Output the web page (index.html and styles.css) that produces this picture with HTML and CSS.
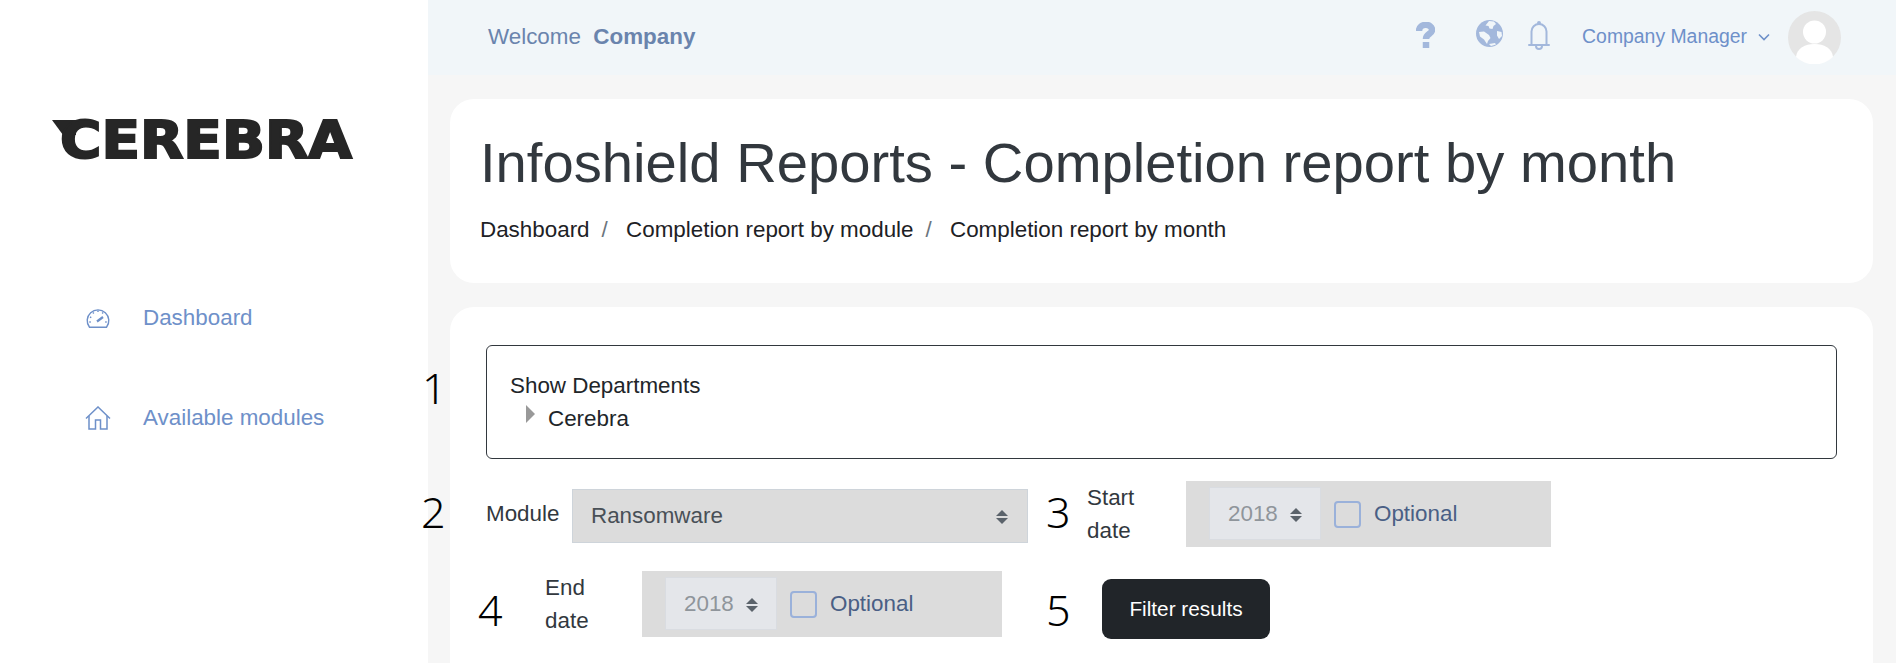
FILE: index.html
```html
<!DOCTYPE html>
<html>
<head>
	<meta charset="utf-8">
	<meta name="viewport" content="width=device-width, initial-scale=1">
	<title>Completion report by month</title>
	<link rel="stylesheet" href="styles.css">
</head>
<body>
	<div class="sidebar">
		<div class="logo">
			<svg width="304" height="70" viewBox="0 0 304 70">
				<polygon points="0,13 24,13 24,28 11,28" fill="#262626"/>
				<text class="logo_text" x="8" y="51" textLength="292" lengthAdjust="spacingAndGlyphs">CEREBRA</text>
			</svg>
		</div>
		<div class="nav">
			<a class="nav_item">
				<svg class="nav_icon" width="24" height="22" viewBox="0 0 24 22" fill="none" stroke="#6e90c9" stroke-width="1.4">
					<path d="M3.500 20.300A10.800 10.800 0 1 1 20.500 20.300Z"/>
					<path d="M11 14.500l6-4.500" stroke-width="2.200"/>
					<path d="M12 3.500v1.500M7 5.500l.8 1M4 10l1.300.6M3.300 15h1.500M20.700 15h-1.500M17 5.500l-.8 1"/>
				</svg>
				Dashboard
			</a>
			<a class="nav_item">
				<svg class="nav_icon" width="26" height="24" viewBox="0 0 26 24" fill="none" stroke="#6e90c9" stroke-width="1.500">
					<path d="M1 12.500L13 1l12 11.500"/>
					<path d="M4 10v13h6.500v-9h5v9H22V10"/>
				</svg>
				Available modules
			</a>
		</div>
	</div>

	<div class="main">
		<div class="header">
			<div class="welcome">Welcome &nbsp;<b>Company</b></div>
			<div class="header_right">
				<svg class="help_icon" width="19" height="26" viewBox="0 0 19 26" fill="none" stroke="#a3b8dc" stroke-width="6.500">
					<path d="M3 9C3 1 16 1 16 8C16 12 10 12 10 17"/>
					<path d="M10 20v6"/>
				</svg>
				<svg class="globe_icon" width="27" height="27" viewBox="0 0 27 27">
					<circle cx="13.500" cy="13.500" r="13.500" fill="#a3b8dc"/>
					<path d="M13 1l5 .5 2 2.500-2.500 2-1 3-3-.5-1-2.500-3-.5zM3 12l5-.5 5 3.500 1.500 3-2.500 3-1 3-3-4.500-4-3zM21 11l4.500 1 .5 4-3 3-2-3.500zM13 24l6-1 1 1.500-5 1.500z" fill="#f1f6f9"/>
				</svg>
				<svg class="bell_icon" width="22" height="29" viewBox="0 0 22 29" fill="none" stroke="#a3b8dc" stroke-width="2">
					<path d="M3.500 23V10.500a7.500 7.500 0 0 1 15 0V23"/>
					<path d="M1 24h20" stroke-linecap="round"/>
					<path d="M8 25a3 3 0 0 0 6 0"/>
					<circle cx="11" cy="2" r="1"/>
				</svg>
				<div class="user_name">Company Manager</div>
				<svg class="chevron" width="12" height="8" viewBox="0 0 12 8" fill="none" stroke="#6e90c9" stroke-width="1.600">
					<path d="M1 1.500l5 5 5-5"/>
				</svg>
				<svg class="avatar" width="53" height="53" viewBox="0 0 53 53">
					<circle cx="26.500" cy="26.500" r="26.500" fill="#e5e5e5"/>
					<circle cx="26.500" cy="21" r="11.500" fill="#fff"/>
					<path d="M8 46c1-9 9-13 18.500-13S44 37 45 46a26.500 26.500 0 0 1-37 0z" fill="#fff"/>
				</svg>
			</div>
		</div>

		<div class="content">
			<div class="card title_card">
				<h1>Infoshield Reports - Completion report by month</h1>
				<div class="breadcrumb">
					<span>Dashboard</span><i>/</i>
					<span>Completion report by module</span><i>/</i>
					<span>Completion report by month</span>
				</div>
			</div>

			<div class="card form_card">
				<div class="dept_box">
					<div>Show Departments</div>
					<div class="dept_item"><span class="arrow"></span>Cerebra</div>
				</div>

				<div class="row first_row">
					<label class="module_label">Module</label>
					<div class="select module_select">
						Ransomware
						<span class="updown"></span>
					</div>
					<label class="date_label start_label">Start<br>date</label>
					<div class="date_group start_group">
						<div class="select year_select">2018<span class="updown"></span></div>
						<span class="check"></span>
						<span class="optional">Optional</span>
					</div>
				</div>

				<div class="row second_row">
					<label class="date_label end_label">End<br>date</label>
					<div class="date_group end_group">
						<div class="select year_select">2018<span class="updown"></span></div>
						<span class="check"></span>
						<span class="optional">Optional</span>
					</div>
					<button type="button" class="filter_btn">Filter results</button>
				</div>

				<span class="mark mark1">1</span>
				<span class="mark mark2">2</span>
				<span class="mark mark3">3</span>
				<span class="mark mark4">4</span>
				<span class="mark mark5">5</span>
			</div>
		</div>
	</div>
</body>
</html>
```

FILE: styles.css
```css
html, body
{
	height: 100%;
}
body
{
	margin: 0;
	display: flex;
	overflow: hidden;
	font-family: "Liberation Sans", Arial, sans-serif;
	font-size: 22.4px;
	color: #32383e;
	background: #fff;
}

/* left side */
.sidebar
{
	width: 428px;
	flex-shrink: 0;
	background: #fff;
}
.logo
{
	padding: 107px 0 0 52px;
	height: 70px;
}
.logo_text
{
	font-family: "DejaVu Sans", sans-serif;
	font-weight: bold;
	font-size: 51px;
	fill: #262626;
	stroke: #262626;
	stroke-width: 2px;
}
.nav
{
	margin-top: 128px;
	padding-left: 85px;
}
.nav_item
{
	display: flex;
	align-items: center;
	height: 26px;
	margin-bottom: 74px;
	color: #6e90c9;
}
.nav_icon
{
	width: 26px;
	margin-right: 32px;
}

/* top bar */
.main
{
	flex: 1;
	display: flex;
	flex-direction: column;
	min-width: 0;
	background: #f6f6f6;
}
.header
{
	height: 75px;
	flex-shrink: 0;
	display: flex;
	align-items: center;
	justify-content: space-between;
	padding: 0 55px 2px 60px;
	box-sizing: border-box;
	background: #f1f6f9;
	color: #6a84ad;
}
.header_right
{
	display: flex;
	align-items: center;
}
.help_icon
{
	margin: -4px 41px 0 0;
}
.globe_icon
{
	margin: -6px 25px 0 0;
}
.bell_icon
{
	margin: -2px 32px 0 0;
}
.user_name
{
	font-size: 19.4px;
	color: #6e90c9;
}
.chevron
{
	margin: 0 18px 0 11px;
}
.avatar
{
	margin-top: 2px;
}

/* cards */
.content
{
	flex: 1;
	display: flex;
	flex-direction: column;
	padding: 24px 23px 0 22px;
}
.card
{
	background: #fff;
	border-radius: 24px;
}
.title_card
{
	height: 184px;
	padding: 30px 0 0 30px;
	box-sizing: border-box;
	margin-bottom: 24px;
	flex-shrink: 0;
}
h1
{
	margin: 0 0 18px 0;
	font-size: 56.2px;
	font-weight: normal;
	line-height: 68px;
}
.breadcrumb
{
	color: #1d2125;
	line-height: 30px;
}
.breadcrumb i
{
	font-style: normal;
	color: #6c757d;
	margin: 0 12px 0 12px;
}
.form_card
{
	flex: 1;
	position: relative;
	padding: 38px 36px 0 36px;
	box-sizing: border-box;
	border-radius: 24px 24px 0 0;
}
.dept_box
{
	height: 114px;
	box-sizing: border-box;
	padding: 23px 23px;
	border: 1px solid #32383e;
	border-radius: 6px;
	line-height: 33px;
	color: #212529;
}
.dept_item
{
	display: flex;
	align-items: center;
	padding-left: 16px;
}
.arrow
{
	width: 0;
	height: 0;
	margin: -9px 13px 0 0;
	border-left: 9px solid #999;
	border-top: 9px solid transparent;
	border-bottom: 9px solid transparent;
}

/* filter form */
.row
{
	display: flex;
	align-items: center;
	height: 66px;
}
.first_row
{
	margin-top: 22px;
}
.second_row
{
	margin-top: 24px;
}
.module_label
{
	width: 86px;
}
.select
{
	display: flex;
	align-items: center;
	justify-content: space-between;
	box-sizing: border-box;
	border: 1px solid #ced4da;
}
.module_select
{
	width: 456px;
	height: 54px;
	margin: 4px 59px 0 0;
	padding: 0 19px 0 18px;
	background: #dcdcdc;
	color: #495057;
}
.updown
{
	display: flex;
	flex-direction: column;
	gap: 2px;
	margin-top: 2px;
}
.updown::before,
.updown::after
{
	content: "";
	border-left: 6px solid transparent;
	border-right: 6px solid transparent;
}
.updown::before
{
	border-bottom: 6.500px solid #5b636b;
}
.updown::after
{
	border-top: 6.500px solid #5b636b;
}
.date_label
{
	line-height: 33px;
}
.start_label
{
	width: 99px;
}
.end_label
{
	width: 97px;
	margin-left: 59px;
}
.date_group
{
	display: flex;
	align-items: center;
	height: 66px;
	background: #dcdcdc;
	padding-left: 23px;
	box-sizing: border-box;
}
.start_group
{
	width: 365px;
}
.end_group
{
	width: 360px;
	margin-right: 100px;
}
.year_select
{
	width: 112px;
	height: 53px;
	margin-top: -1px;
	padding: 0 18px 0 18px;
	background: #e4e6ea;
	border-color: #d9dce1;
	color: #8f959b;
}
.check
{
	width: 27px;
	height: 27px;
	margin-left: 13px;
	box-sizing: border-box;
	border: 2px solid #9ab1da;
	border-radius: 4px;
}
.optional
{
	margin-left: 13px;
	color: #4a5f85;
}
.filter_btn
{
	width: 168px;
	height: 60px;
	margin-top: 10px;
	border: 0;
	border-radius: 9px;
	background: #212529;
	color: #fff;
	font-family: inherit;
	font-size: 20.800px;
}

/* numbers written over the screenshot */
.mark
{
	position: absolute;
	font-family: "Noto Sans", sans-serif;
	font-weight: 300;
	font-size: 43px;
	line-height: 50px;
	color: #000;
}
.mark1 { left: -28px; top: 56px; }
.mark2 { left: -29px; top: 180px; }
.mark3 { left: 596px; top: 180px; }
.mark4 { left: 28px; top: 278px; }
.mark5 { left: 596px; top: 278px; }
```
